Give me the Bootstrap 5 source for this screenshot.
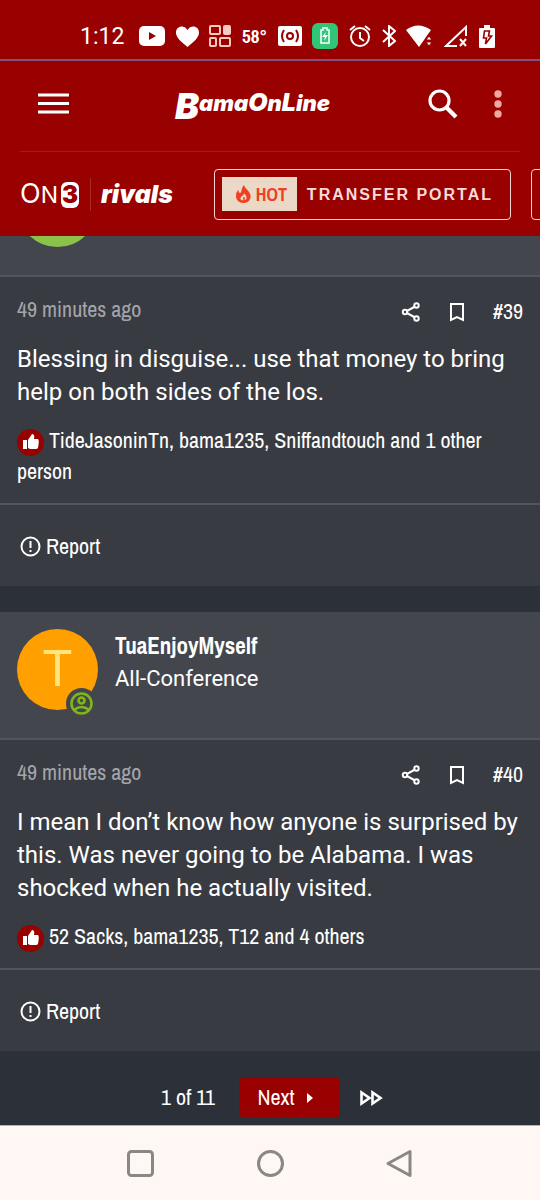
<!DOCTYPE html>
<html lang="en">
<head>
<meta charset="utf-8">
<meta name="viewport" content="width=device-width, initial-scale=1">
<title>BamaOnLine</title>
<link href="https://cdn.jsdelivr.net/npm/bootstrap@5.3.0/dist/css/bootstrap.min.css" rel="stylesheet">
<style>
  :root { --crimson: #990000; --panel: #393b42; --head: #43474d; --page: #2c3038; --rule: #52555d; --narrow: "Liberation Sans Narrow", "Archivo Narrow", "Roboto Condensed", "Liberation Sans", sans-serif; }
  body { background: var(--page); color: #fff; font-family: Roboto, sans-serif; font-size: 24px; line-height: 33px; }
  svg { display: block; flex: none; }
  a, .plain { color: inherit; text-decoration: none; }
  .plain { background: none; border: 0; padding: 0; }
  .narrow { font-family: var(--narrow); font-size: 22px; line-height: 31px; }
  .crimson { background: var(--crimson); }
  .status { height: 61px; padding: 13px 45px 0 80px; border-bottom: 2px solid #80507f; font-size: 23px; }
  .temp { font-family: var(--narrow); font-weight: 700; font-size: 19px; }
  .topbar { height: 91px; margin: 0 20px; padding: 0 14px 5px 18px; border-bottom: 1px solid #a51a1a; }
  .logo { font-family: Inter, sans-serif; font-weight: 900; font-style: italic; font-size: 22px; line-height: 26px; }
  .logo .initial { font-size: 36px; vertical-align: -8px; }
  .logo .tall { font-size: 25px; }
  .strip { height: 84px; padding-left: 20px; }
  .on3 { font-family: Inter, sans-serif; font-weight: 400; font-size: 27px; line-height: 27px; }
  .on3 .low { font-size: 23px; }
  .on3 .three { background: #fff; color: var(--crimson); font-weight: 900; font-size: 24px; border-radius: 6px; width: 18px; margin-left: 3px; line-height: 26px; }
  .rivals { font-family: Inter, sans-serif; font-weight: 900; font-style: italic; font-size: 25px; border-left: 1px solid #ad2a2a; padding-left: 10px; margin-left: 11px; }
  .promo { height: 51px; border: 1px solid #f5d5d0; border-radius: 4px; padding: 0 17px 0 7px; color: #f8dcd8; font-family: "Liberation Sans", sans-serif; font-weight: 700; font-size: 16px; letter-spacing: 2px; gap: 10px; }
  .promos { gap: 20px; margin-left: 41px; }
  .hot { background: #ebd8c6; color: #ee4023; height: 34px; width: 75px; font-family: var(--narrow); font-size: 18px; letter-spacing: 0; gap: 5px; }
  .post-head { background: var(--head); border-bottom: 2px solid var(--rule); padding: 17px 17px 28px; gap: 17px; }
  .peek { height: 41px; padding-top: 0; overflow: hidden; }
  .avatar { width: 81px; height: 81px; border-radius: 50%; font-size: 50px; line-height: 81px; flex: none; }
  .avatar.tua { background: #ffa000; color: #ffe57f; }
  .avatar.leaf { background: #8bc34a; }
  .online { position: absolute; right: 1px; bottom: -9px; width: 31px; height: 31px; border-radius: 50%; background: var(--head); padding: 4px; }
  .name { font-weight: 700; font-size: 23px; line-height: 33px; }
  .rank { font-size: 22px; line-height: 33px; }
  .post-body { background: var(--panel); border-bottom: 2px solid var(--rule); padding: 17px 17px 16px; }
  .when { color: #a3a5ac; }
  .tools { gap: 26px; padding-top: 2px; }
  .like { display: inline-flex; width: 27px; height: 27px; border-radius: 50%; vertical-align: middle; margin-right: 5px; }
  .post-foot { background: var(--panel); padding: 26px 20px 24px; }
  .post-foot a { gap: 5px; }
  .post-next { margin-top: 26px; }
  .pager { padding: 26px 0 7px 4px; }
  .next { width: 101px; height: 41px; border-radius: 5px; gap: 13px; padding-right: 8px; }
  .system { background: #fff7f4; height: 75px; padding: 0 126px; border-top: 1px solid #b7b2b0; }
</style>
</head>
<body>
<header class="crimson">
  <div class="status crimson d-flex justify-content-between align-items-center">
    <span class="me-1">1:12</span>
    <svg width="26" height="20" viewBox="0 0 26 20"><rect width="26" height="20" rx="5" fill="#fff"/><path d="M10 6l7 4-7 4z" fill="#900"/></svg>
    <svg width="23" height="21" viewBox="0 0 23 21"><path d="M11.500 21C4 15 0 11 0 6.500 0 0 8-2 11.500 4 15-2 23 0 23 6.500 23 11 19 15 11.500 21z" fill="#fff"/></svg>
    <svg width="22" height="22" viewBox="0 0 22 22" fill="none" stroke="#fbc9c2" stroke-width="2"><rect x="1" y="1" width="10" height="8" rx="1"/><rect x="15" y="1" width="6" height="8" rx="1" fill="#fbc9c2"/><rect x="1" y="13" width="6" height="8" rx="1"/><rect x="11" y="13" width="10" height="8" rx="1"/></svg>
    <span class="temp">58°</span>
    <svg width="24" height="20" viewBox="0 0 24 20"><rect width="24" height="20" rx="2" fill="#fff"/><g fill="none" stroke="#900" stroke-width="2"><circle cx="12" cy="10" r="3"/><path d="M6 4q-4 6 0 12M18 4q4 6 0 12"/></g></svg>
    <svg width="26" height="26" viewBox="0 0 26 26"><rect width="26" height="26" rx="6" fill="#2fc678"/><path d="M9 7h2V5h4v2h2v13H9z" fill="none" stroke="#fff" stroke-width="1.500"/><path d="M14 9l-4 5h3l-1 4 4-6h-3z" fill="#fff"/></svg>
    <svg width="22" height="24" viewBox="0 0 22 24" fill="none" stroke="#fff" stroke-width="2"><circle cx="11" cy="13" r="9"/><path d="M11 8v6l4 3M1 6l5-4M21 6l-5-4"/></svg>
    <svg width="14" height="22" viewBox="0 0 14 22" fill="none" stroke="#fff" stroke-width="2"><path d="M1 5l12 11-6 5V1l6 5L1 17"/></svg>
    <svg width="27" height="22" viewBox="0 0 27 22" fill="#fff"><path d="M0 5q12-9 25 0l-5 7-2 3-5 7z"/><path d="M20 15l3-4 3 4zM20 17h6l-3 4z" stroke="#900" stroke-width="1"/></svg>
    <svg width="24" height="22" viewBox="0 0 24 22" fill="none" stroke="#fff" stroke-width="2"><path d="M22 11V2L2 21h11M16 14l6 7M22 14l-6 7"/></svg>
    <svg width="16" height="23" viewBox="0 0 16 23"><path d="M1 3h4V0h6v3h4q1 0 1 1v18q0 1-1 1H1q-1 0-1-1V4q0-1 1-1z" fill="#fff"/><path d="M5.500 6h5l-1 5h3l-6 8 1-6h-3z" fill="none" stroke="#900" stroke-width="1.600"/></svg>
  </div>
  <div class="topbar d-flex justify-content-between align-items-center">
    <button class="plain" aria-label="Menu"><svg width="31" height="21" viewBox="0 0 31 21" stroke="#fff" stroke-width="3"><path d="M0 2h31M0 10.500h31M0 19h31"/></svg></button>
    <a class="logo ps-2" href="#"><span class="initial">B</span>ama<span class="tall">O</span>n<span class="tall">L</span>ine</a>
    <div class="d-flex align-items-center gap-4">
      <button class="plain me-2" aria-label="Search"><svg width="30" height="30" viewBox="0 0 30 30" fill="none" stroke="#fff"><circle cx="11.500" cy="11.500" r="9.500" stroke-width="3.200"/><path d="M18 18l10 10" stroke-width="4.200"/></svg></button>
      <button class="plain px-1" aria-label="More"><svg width="8" height="28" viewBox="0 0 8 28" fill="#f0a8a5"><circle cx="4" cy="4" r="3.700"/><circle cx="4" cy="14" r="3.700"/><circle cx="4" cy="24" r="3.700"/></svg></button>
    </div>
  </div>
  <nav class="strip d-flex align-items-center overflow-hidden" aria-label="Network">
    <a class="on3 d-flex align-items-baseline" href="#">O<span class="low">N</span><span class="three text-center">3</span></a>
    <a class="rivals" href="#">rivals</a>
    <div class="promos d-flex flex-shrink-0">
      <a class="promo d-flex align-items-center text-nowrap" href="#">
        <span class="hot d-flex align-items-center justify-content-center ps-1"><svg width="15" height="18" viewBox="0 0 15 18"><path d="M8 0c1 4 6 6 6.500 10.500C15 15 12 18 7.500 18S0 15 0 11c0-3 1-5 2.500-6 0 2 .5 3 1.500 3 2 0 1-5 4-8z" fill="#ee4023"/><path d="M8 8c0 3-4 3-3.500 6 .5 2 5.500 2 6-.5C11 11 9 10 8 8z" fill="#ebd8c6"/><path d="M8 12v4" stroke="#ee4023" stroke-width="1.500"/></svg>HOT</span>TRANSFER PORTAL</a>
      <a class="promo" href="#" aria-label="More stories"></a>
    </div>
  </nav>
</header>

<main>
  <article>
    <div class="post-head peek d-flex align-items-end"><div class="avatar leaf"></div></div>
    <div class="post-body">
      <div class="narrow d-flex justify-content-between align-items-start">
        <a class="when" href="#">49 minutes ago</a>
        <div class="tools d-flex align-items-center">
          <button class="plain" aria-label="Share"><svg width="20" height="20" viewBox="0 0 20 20" fill="none" stroke="#fff" stroke-width="2"><path d="M15 4L4 10l11 6"/><g fill="#393b42"><circle cx="15.500" cy="3.500" r="2.200"/><circle cx="4" cy="10" r="2.200"/><circle cx="15.500" cy="16.500" r="2.200"/></g></svg></button>
          <button class="plain" aria-label="Bookmark"><svg width="20" height="20" viewBox="0 0 20 20" fill="none" stroke="#fff" stroke-width="2"><path d="M4 2h12v16l-6-3-6 3z"/></svg></button>
          <a href="#">#39</a>
        </div>
      </div>
      <p class="my-3">Blessing in disguise... use that money to bring help on both sides of the los.</p>
      <div class="narrow"><span class="like crimson align-items-center justify-content-center"><svg width="16" height="16" viewBox="0 0 16 16" fill="#fff"><path d="M0 6h4v9H0zM5 6l4-6q3 0 2 5h4q1.500 1 0 9-1 1-2 1H7l-2-1z"/></svg></span><a href="#">TideJasoninTn, bama1235, Sniffandtouch and 1 other person</a></div>
    </div>
    <div class="post-foot d-flex"><a class="narrow d-flex align-items-center" href="#"><svg width="21" height="21" viewBox="0 0 21 21" fill="none" stroke="#fff" stroke-width="2"><circle cx="10.500" cy="10.500" r="9"/><path d="M10.500 5v7M10.500 14v2"/></svg>Report</a></div>
  </article>

  <article class="post-next">
    <div class="post-head d-flex align-items-start">
      <div class="avatar tua text-center position-relative">T<span class="online"><svg width="23" height="23" viewBox="0 0 23 23" fill="none" stroke="#7fb719" stroke-width="2.600"><circle cx="11.500" cy="11.500" r="10"/><circle cx="11.500" cy="8.500" r="3"/><path d="M4 18q7.500-6 15 0"/></svg></span></div>
      <div><a class="narrow name d-block" href="#">TuaEnjoyMyself</a><div class="rank">All-Conference</div></div>
    </div>
    <div class="post-body">
      <div class="narrow d-flex justify-content-between align-items-start">
        <a class="when" href="#">49 minutes ago</a>
        <div class="tools d-flex align-items-center">
          <button class="plain" aria-label="Share"><svg width="20" height="20" viewBox="0 0 20 20" fill="none" stroke="#fff" stroke-width="2"><path d="M15 4L4 10l11 6"/><g fill="#393b42"><circle cx="15.500" cy="3.500" r="2.200"/><circle cx="4" cy="10" r="2.200"/><circle cx="15.500" cy="16.500" r="2.200"/></g></svg></button>
          <button class="plain" aria-label="Bookmark"><svg width="20" height="20" viewBox="0 0 20 20" fill="none" stroke="#fff" stroke-width="2"><path d="M4 2h12v16l-6-3-6 3z"/></svg></button>
          <a href="#">#40</a>
        </div>
      </div>
      <p class="my-3">I mean I don’t know how anyone is surprised by this. Was never going to be Alabama. I was shocked when he actually visited.</p>
      <div class="narrow"><span class="like crimson align-items-center justify-content-center"><svg width="16" height="16" viewBox="0 0 16 16" fill="#fff"><path d="M0 6h4v9H0zM5 6l4-6q3 0 2 5h4q1.500 1 0 9-1 1-2 1H7l-2-1z"/></svg></span><a href="#">52 Sacks, bama1235, T12 and 4 others</a></div>
    </div>
    <div class="post-foot d-flex"><a class="narrow d-flex align-items-center" href="#"><svg width="21" height="21" viewBox="0 0 21 21" fill="none" stroke="#fff" stroke-width="2"><circle cx="10.500" cy="10.500" r="9"/><path d="M10.500 5v7M10.500 14v2"/></svg>Report</a></div>
  </article>

  <nav class="pager narrow d-flex justify-content-center align-items-center" aria-label="Pages">
    <span class="me-4">1 of 11</span>
    <a class="next crimson d-flex align-items-center justify-content-center" href="#">Next<svg width="6" height="10" viewBox="0 0 6 10" fill="#fff"><path d="M0 0l6 5-6 5z"/></svg></a>
    <a class="ms-3 ps-1" href="#" aria-label="Last page"><svg width="23" height="16" viewBox="0 0 23 16" fill="none" stroke="#fff" stroke-width="2.600"><path d="M1.500 2.500v11l8-5.500zM12.500 2.500v11l8-5.500z"/></svg></a>
  </nav>
</main>

<footer class="system d-flex justify-content-between align-items-center">
  <button class="plain" aria-label="Recent apps"><svg width="29" height="29" viewBox="0 0 29 29" fill="none" stroke="#8b8784" stroke-width="3"><rect x="2.500" y="2.500" width="24" height="24" rx="3"/></svg></button>
  <button class="plain" aria-label="Home"><svg width="29" height="29" viewBox="0 0 29 29" fill="none" stroke="#8b8784" stroke-width="3"><circle cx="14.500" cy="14.500" r="12"/></svg></button>
  <button class="plain" aria-label="Back"><svg width="29" height="29" viewBox="0 0 29 29" fill="none" stroke="#8b8784" stroke-width="3" stroke-linejoin="round"><path d="M25 2.500v24L3 14.500z"/></svg></button>
</footer>
<script src="https://cdn.jsdelivr.net/npm/bootstrap@5.3.0/dist/js/bootstrap.bundle.min.js"></script>
</body>
</html>
